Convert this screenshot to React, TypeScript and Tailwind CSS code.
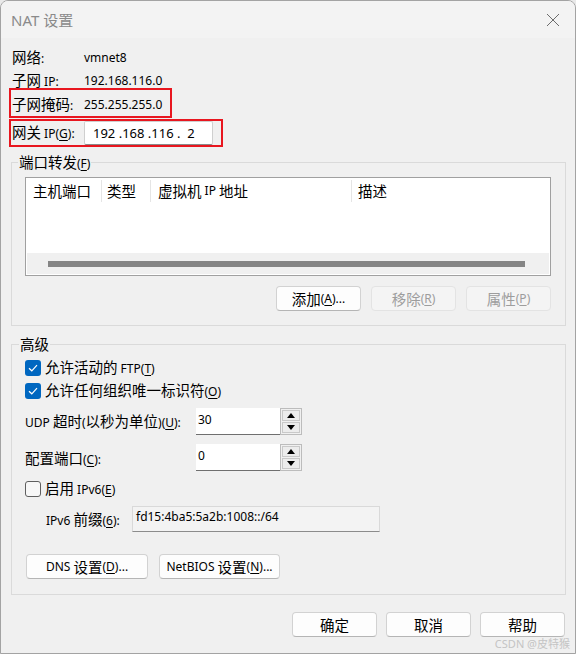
import React from "react";

function Z({ children }: { children: React.ReactNode }) {
  return <span className="text-[14.5px]">{children}</span>;
}
function U({ children }: { children: React.ReactNode }) {
  return <span className="underline underline-offset-2">{children}</span>;
}

function Btn({
  children,
  className = "",
  disabled = false,
}: {
  children: React.ReactNode;
  className?: string;
  disabled?: boolean;
}) {
  return (
    <div
      className={`flex items-center justify-center rounded-[4px] border ${
        disabled
          ? "bg-[#f4f4f4] border-[#e3e3e3] text-[#9d9d9d]"
          : "bg-[#fdfdfd] border-[#d2d2d2] border-b-[#b5b5b5] text-black"
      } ${className}`}
    >
      {children}
    </div>
  );
}

function Check({ checked }: { checked: boolean }) {
  return checked ? (
    <div className="w-[16px] h-[16px] rounded-[3px] bg-[#0067c0] flex items-center justify-center">
      <svg width="10" height="8" viewBox="0 0 10 8">
        <path d="M1 4.2 L3.8 6.8 L9 1.2" fill="none" stroke="white" strokeWidth="1.2" />
      </svg>
    </div>
  ) : (
    <div className="w-[16px] h-[16px] rounded-[3px] bg-[#f7f7f7] border border-[#5f5f5f]" />
  );
}

function Spin({ value }: { value: string }) {
  return (
    <div className="flex h-[27px]">
      <div className="w-[84px] bg-white border-b border-[#6f6f6f] pl-[2px] pt-[4px] text-[12px] leading-[16px]">
        {value}
      </div>
      <div className="w-[22px] border border-[#bcbcbc] bg-[#f0f0f0] p-[1px] flex flex-col gap-[1px]">
        <div className="flex-1 bg-[#ececec] border border-[#c9c9c9] flex items-center justify-center">
          <svg width="8" height="5" viewBox="0 0 8 5">
            <path d="M0 5 L4 0 L8 5 Z" fill="#000" />
          </svg>
        </div>
        <div className="flex-1 bg-[#ececec] border border-[#c9c9c9] flex items-center justify-center">
          <svg width="8" height="5" viewBox="0 0 8 5">
            <path d="M0 0 L8 0 L4 5 Z" fill="#000" />
          </svg>
        </div>
      </div>
    </div>
  );
}

export default function App() {
  return (
    <div className="w-[576px] h-[654px] bg-[#e9e9e9]">
      <div className="relative w-[576px] h-[654px] bg-[#f0f0f0] border border-[#a3a3a3] rounded-t-[8px] overflow-hidden font-['Noto_Sans','Noto_Sans_CJK_SC',sans-serif] text-[12px] leading-[16px] text-black flex flex-col">
        {/* Title bar */}
        <div className="h-[37px] bg-[#f3f3f3] flex items-center pl-[10px] pr-[14px] justify-between">
          <span className="text-[15px] text-[#8a8a8a] pt-[1px]">NAT 设置</span>
          <svg width="14" height="14" viewBox="0 0 14 14" className="mr-[1px]">
            <path d="M1 1 L13 13 M13 1 L1 13" stroke="#6c6c6c" strokeWidth="1" fill="none" />
          </svg>
        </div>

        {/* Body */}
        <div className="flex flex-col pl-[8px] pr-[9px] pt-[10px]">
          <div className="h-[20px] flex items-center pl-[3px]">
            <div className="w-[72px]">
              <Z>网络</Z>:
            </div>
            <div>vmnet8</div>
          </div>
          <div className="h-[20px] pt-[6px] flex items-center pl-[3px]">
            <div className="w-[72px]">
              <Z>子网</Z> IP:
            </div>
            <div>192.168.116.0</div>
          </div>
          <div className="w-[163px] h-[30px] border-2 border-[#e8161f] pt-[4px] pl-[1px] flex items-center">
            <div className="w-[72px] whitespace-nowrap">
              <Z>子网掩码</Z>:
            </div>
            <div>255.255.255.0</div>
          </div>
          <div className="mt-[1px] w-[214px] h-[28px] border-2 border-[#e8161f] pl-[1px] flex items-center">
            <div className="w-[72px] whitespace-nowrap">
              <Z>网关</Z> IP(<U>G</U>):
            </div>
            <div className="w-[129px] h-[24px] bg-white border border-[#cfcfcf] border-b-[#8a8a8a] rounded-[2px] flex items-center pl-[8px] text-[13px]">
              192 .168 .116 .&nbsp; 2
            </div>
          </div>

          {/* Port forwarding group */}
          <div className="relative mt-[15px] ml-[2px] border border-[#dadada] pt-[14px] pl-[13px] pr-[14px] pb-[14px] flex flex-col">
            <span className="absolute -top-[9px] left-[6px] px-[1px] bg-[#f0f0f0]">
              <Z>端口转发</Z>(<U>F</U>)
            </span>
            <div className="h-[99px] border border-[#a0a0a0] bg-white flex flex-col">
              <div className="h-[26px] flex items-center">
                <div className="w-[76px] h-[22px] flex items-center pl-[7px] border-r border-[#e5e5e5]">
                  <Z>主机端口</Z>
                </div>
                <div className="w-[49px] h-[22px] flex items-center pl-[5px] border-r border-[#e5e5e5]">
                  <Z>类型</Z>
                </div>
                <div className="w-[201px] h-[22px] flex items-center pl-[7px] border-r border-[#e5e5e5]">
                  <Z>虚拟机</Z>&nbsp;IP&nbsp;<Z>地址</Z>
                </div>
                <div className="h-[22px] flex items-center pl-[6px]">
                  <Z>描述</Z>
                </div>
              </div>
              <div className="flex-1" />
              <div className="h-[21px] bg-[#f0f0f0] mx-[1px] mb-[1px] flex items-center pl-[21px] pr-[24px]">
                <div className="h-[6px] flex-1 bg-[#858585]" />
              </div>
            </div>
            <div className="mt-[10px] flex justify-end gap-[10px]">
              <Btn className="w-[85px] h-[25px]">
                <Z>添加</Z>(<U>A</U>)...
              </Btn>
              <Btn className="w-[85px] h-[25px]" disabled>
                <Z>移除</Z>(<U>R</U>)
              </Btn>
              <Btn className="w-[85px] h-[25px]" disabled>
                <Z>属性</Z>(<U>P</U>)
              </Btn>
            </div>
          </div>

          {/* Advanced group */}
          <div className="relative mt-[18px] ml-[2px] border border-[#dadada] pt-[15px] pl-[13px] pb-[15px] flex flex-col">
            <span className="absolute -top-[9px] left-[7px] px-[1px] bg-[#f0f0f0]">
              <Z>高级</Z>
            </span>
            <div className="h-[16px] flex items-center gap-[4px]">
              <Check checked />
              <span>
                <Z>允许活动的</Z> FTP(<U>T</U>)
              </span>
            </div>
            <div className="mt-[7px] h-[16px] flex items-center gap-[4px]">
              <Check checked />
              <span>
                <Z>允许任何组织唯一标识符</Z>(<U>O</U>)
              </span>
            </div>
            <div className="mt-[9px] flex items-center">
              <div className="w-[171px] pt-[1px]">
                UDP <Z>超时</Z>(<Z>以秒为单位</Z>)(<U>U</U>):
              </div>
              <Spin value="30" />
            </div>
            <div className="mt-[9px] flex items-center">
              <div className="w-[171px] pt-[3px]">
                <Z>配置端口</Z>(<U>C</U>):
              </div>
              <Spin value="0" />
            </div>
            <div className="mt-[10px] h-[16px] flex items-center gap-[4px]">
              <Check checked={false} />
              <span>
                <Z>启用</Z> IPv6(<U>E</U>)
              </span>
            </div>
            <div className="mt-[9px] flex items-center pl-[21px]">
              <div className="w-[86px] pt-[1px]">
                IPv6 <Z>前缀</Z>(<U>6</U>):
              </div>
              <div className="w-[248px] h-[26px] bg-[#f3f3f3] border border-[#d9d9d9] border-b-[#8c8c8c] pl-[3px] pt-[2px] text-[12px]">
                fd15:4ba5:5a2b:1008::/64
              </div>
            </div>
            <div className="mt-[22px] flex gap-[11px] pl-[1px]">
              <Btn className="w-[122px] h-[25px]">
                DNS&nbsp;<Z>设置</Z>(<U>D</U>)...
              </Btn>
              <Btn className="w-[121px] h-[25px]">
                NetBIOS&nbsp;<Z>设置</Z>(<U>N</U>)...
              </Btn>
            </div>
          </div>

          {/* Footer buttons */}
          <div className="mt-[17px] flex justify-end gap-[9px] pr-[1px]">
            <Btn className="w-[85px] h-[25px]">
              <Z>确定</Z>
            </Btn>
            <Btn className="w-[85px] h-[25px]">
              <Z>取消</Z>
            </Btn>
            <Btn className="w-[85px] h-[25px]">
              <Z>帮助</Z>
            </Btn>
          </div>
        </div>

        <div className="absolute right-[5px] bottom-[3px] text-[11px] leading-[12px] text-[#c4c4c4]">
          CSDN @皮特猴
        </div>
      </div>
    </div>
  );
}
